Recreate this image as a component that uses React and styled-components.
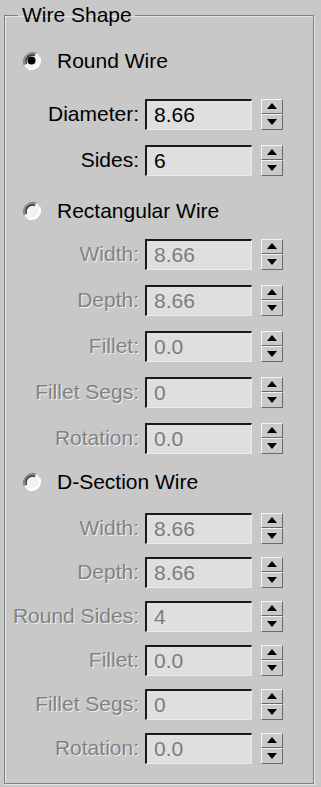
import React from "react";
import styled, { createGlobalStyle, css } from "styled-components";

const Global = createGlobalStyle`
  html, body { margin: 0; padding: 0; background: #c8c8c8; }
  body { width: 321px; height: 787px; overflow: hidden; }
  #root { width: 321px; height: 787px; }
`;

const Page = styled.div`
  box-sizing: border-box;
  width: 321px;
  height: 787px;
  padding: 3px 7px 3px 4px;
  background: #c8c8c8;
  font-family: "Liberation Sans", Arial, sans-serif;
  font-size: 21px;
`;

const Group = styled.fieldset`
  box-sizing: border-box;
  margin: 0;
  height: 100%;
  padding: 14px 0 0 0;
  border: 1px solid #808080;
  box-shadow: inset 1px 1px 0 #e6e6e6, 1px 1px 0 #e6e6e6;
  display: flex;
  flex-direction: column;
`;

const Legend = styled.legend`
  margin-left: 13px;
  padding: 0 3px 0 4px;
  font-size: 21px;
  line-height: 24px;
  color: #000;
`;

const RadioRow = styled.div`
  display: flex;
  align-items: center;
  height: 40px;
  padding-left: 16px;
  gap: 14px;
  color: #000;
  margin-top: ${(p) => p.$before || 0}px;
  margin-bottom: ${(p) => p.$after || 0}px;
`;

const RadioIcon = ({ checked }) => (
  <svg width="22" height="22" viewBox="0 0 22 22">
    <circle cx="11" cy="11" r="9" fill="#f2f2f2" />
    <path d="M3.5 15 A9 9 0 0 1 15 3.5" stroke="#8a8a8a" strokeWidth="2.2" fill="none" />
    <path d="M5.5 14 A6.5 6.5 0 0 1 14 5.5" stroke="#3a3a3a" strokeWidth="1.6" fill="none" />
    <path d="M18.5 7.5 A9 9 0 0 1 7.5 18.5" stroke="#ffffff" strokeWidth="2.2" fill="none" />
    {checked && <circle cx="10.5" cy="10.5" r="4" fill="#000" />}
  </svg>
);

const ParamRow = styled.div`
  display: grid;
  grid-template-columns: 135px 107px 22px;
  column-gap: 6px;
  align-items: center;
  height: ${(p) => (p.$compact ? 44 : 46)}px;
  margin-left: -1px;
`;

const Label = styled.span`
  text-align: right;
  white-space: nowrap;
  justify-self: end;
  ${(p) =>
    p.$disabled
      ? css`
          color: #828282;
          text-shadow: 1px 1px 0 #f0f0f0;
        `
      : css`
          color: #000;
        `}
`;

const Field = styled.div`
  box-sizing: border-box;
  height: 31px;
  background: #dfdfdf;
  border-top: 2px solid #1a1a1a;
  border-left: 2px solid #1a1a1a;
  border-right: 1px solid #ececec;
  border-bottom: 1px solid #ececec;
  padding-left: 7px;
  display: flex;
  align-items: center;
  font-size: 21px;
  color: ${(p) => (p.$disabled ? "#7c7c7c" : "#000")};
`;

const Spinner = styled.div`
  box-sizing: border-box;
  height: 31px;
  margin-left: 3px;
  width: 22px;
  display: flex;
  flex-direction: column;
`;

const SpinBtn = styled.div`
  flex: 1;
  box-sizing: border-box;
  border-top: 1px solid #f4f4f4;
  border-left: 1px solid #f4f4f4;
  border-right: 1px solid #6a6a6a;
  border-bottom: 1px solid #6a6a6a;
  background: #cacaca;
  display: flex;
  align-items: center;
  justify-content: center;
`;

const Tri = ({ up }) => (
  <svg width="10" height="6" viewBox="0 0 10 6">
    <path d={up ? "M0 6 L5 0 L10 6 Z" : "M0 0 L10 0 L5 6 Z"} fill="#000" />
  </svg>
);

const Param = ({ label, value, disabled, compact }) => (
  <ParamRow $compact={compact}>
    <Label $disabled={disabled}>{label}</Label>
    <Field $disabled={disabled}>{value}</Field>
    <Spinner>
      <SpinBtn>
        <Tri up />
      </SpinBtn>
      <SpinBtn>
        <Tri />
      </SpinBtn>
    </Spinner>
  </ParamRow>
);

const rect = [
  ["Width:", "8.66"],
  ["Depth:", "8.66"],
  ["Fillet:", "0.0"],
  ["Fillet Segs:", "0"],
  ["Rotation:", "0.0"],
];

const dsec = [
  ["Width:", "8.66"],
  ["Depth:", "8.66"],
  ["Round Sides:", "4"],
  ["Fillet:", "0.0"],
  ["Fillet Segs:", "0"],
  ["Rotation:", "0.0"],
];

export default function App() {
  return (
    <>
      <Global />
      <Page>
        <Group>
          <Legend>Wire Shape</Legend>
          <RadioRow $after={10}>
            <RadioIcon checked />
            <span>Round Wire</span>
          </RadioRow>
          <Param label="Diameter:" value="8.66" />
          <Param label="Sides:" value="6" />
          <RadioRow $before={8}>
            <RadioIcon />
            <span>Rectangular Wire</span>
          </RadioRow>
          {rect.map(([l, v], i) => (
            <Param key={"r" + i} label={l} value={v} disabled />
          ))}
          <RadioRow $before={1} $after={4}>
            <RadioIcon />
            <span>D-Section Wire</span>
          </RadioRow>
          {dsec.map(([l, v], i) => (
            <Param key={"d" + i} label={l} value={v} disabled compact />
          ))}
        </Group>
      </Page>
    </>
  );
}
